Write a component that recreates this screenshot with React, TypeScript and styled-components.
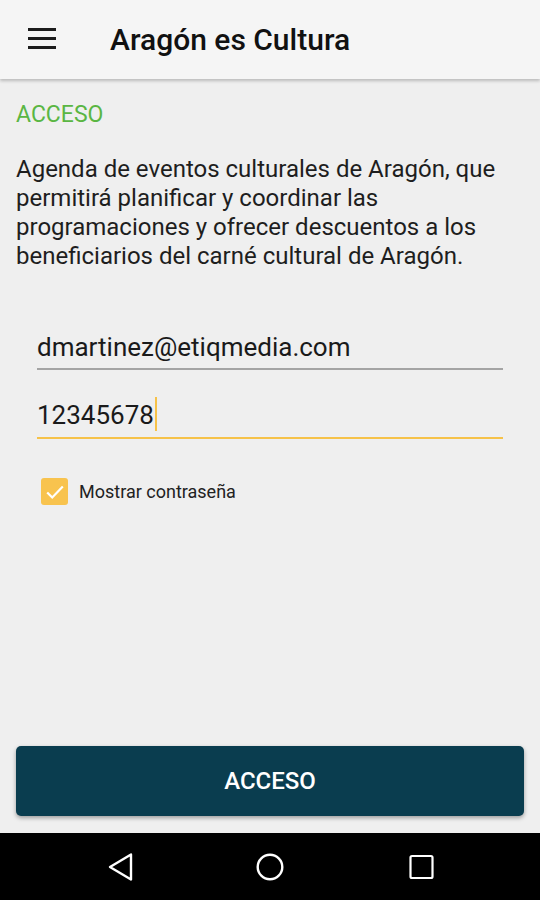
import React from "react";
import styled, { createGlobalStyle } from "styled-components";

const GlobalStyle = createGlobalStyle`
  html, body {
    margin: 0;
    padding: 0;
    background: #efefef;
  }
  body {
    font-family: Roboto, "Liberation Sans", sans-serif;
  }
`;

const Screen = styled.div`
  width: 540px;
  height: 900px;
  display: flex;
  flex-direction: column;
  background: #efefef;
  overflow: hidden;
`;

const AppBar = styled.header`
  height: 79px;
  flex: none;
  display: flex;
  align-items: center;
  background: #f5f5f5;
  box-shadow: 0 2px 3px rgba(0, 0, 0, 0.22);
  position: relative;
  z-index: 1;
`;

const MenuButton = styled.div`
  width: 28px;
  margin-left: 28px;
  margin-right: 54px;
  margin-bottom: 3px;
  display: flex;
  flex-direction: column;
  gap: 6px;
  span {
    display: block;
    height: 3px;
    background: #1c1c1c;
  }
`;

const Title = styled.h1`
  margin: 0;
  font-size: 30px;
  font-weight: 500;
  color: #111;
  padding-bottom: 1px;
`;

const Content = styled.main`
  flex: 1;
  display: flex;
  flex-direction: column;
  padding: 0 16px;
`;

const SectionLabel = styled.div`
  margin-top: 22px;
  font-size: 23px;
  line-height: 28px;
  color: #5ab643;
`;

const Intro = styled.p`
  margin: 26px 0 0;
  font-size: 24px;
  line-height: 29px;
  color: #1e1e1e;
`;

const Form = styled.div`
  margin-top: 61px;
  padding: 0 21px;
  display: flex;
  flex-direction: column;
`;

const Field = styled.div<{ $active?: boolean }>`
  font-size: 26px;
  line-height: 30px;
  padding-bottom: 6px;
  border-bottom: 2px solid ${(p) => (p.$active ? "#f6c249" : "#a4a4a4")};
  color: #1a1a1a;
  & + & {
    margin-top: 27px;
  }
`;

const Caret = styled.span`
  display: inline-block;
  width: 2px;
  height: 34px;
  background: #f6c249;
  margin-left: 1px;
  vertical-align: -7px;
`;

const CheckRow = styled.label`
  display: flex;
  align-items: center;
  gap: 11px;
  margin-top: 39px;
  margin-left: 4px;
  font-size: 18px;
  color: #222;
`;

const CheckBox = styled.span`
  width: 27px;
  height: 27px;
  border-radius: 3px;
  background: #f8c34e;
  display: flex;
  align-items: center;
  justify-content: center;
`;

const Spacer = styled.div`
  flex: 1;
`;

const SubmitButton = styled.button`
  height: 70px;
  margin-bottom: 17px;
  border: none;
  border-radius: 5px;
  background: #0a3d4f;
  color: #fff;
  font-family: Roboto, "Liberation Sans", sans-serif;
  font-size: 24px;
  font-weight: 500;
  box-shadow: 0 2px 4px rgba(0, 0, 0, 0.35);
`;

const NavBar = styled.nav`
  height: 67px;
  flex: none;
  background: #000;
  display: grid;
  grid-template-columns: 1fr 1fr 1fr;
  align-items: center;
  justify-items: center;
  padding: 0 40px;
`;

export default function App() {
  return (
    <>
      <GlobalStyle />
      <Screen>
        <AppBar>
          <MenuButton>
            <span />
            <span />
            <span />
          </MenuButton>
          <Title>Aragón es Cultura</Title>
        </AppBar>
        <Content>
          <SectionLabel>ACCESO</SectionLabel>
          <Intro>
            Agenda de eventos culturales de Aragón, que permitirá planificar y
            coordinar las programaciones y ofrecer descuentos a los
            beneficiarios del carné cultural de Aragón.
          </Intro>
          <Form>
            <Field>dmartinez@etiqmedia.com</Field>
            <Field $active>
              12345678
              <Caret />
            </Field>
            <CheckRow>
              <CheckBox>
                <svg width="22" height="22" viewBox="0 0 24 24">
                  <path
                    d="M3.5 12.5l5.5 5.5L20.5 6"
                    fill="none"
                    stroke="#fff"
                    strokeWidth="2.4"
                  />
                </svg>
              </CheckBox>
              Mostrar contraseña
            </CheckRow>
          </Form>
          <Spacer />
          <SubmitButton>ACCESO</SubmitButton>
        </Content>
        <NavBar>
          <svg width="32" height="32" viewBox="0 0 32 32">
            <path
              d="M30 3.5L9 16L30 28.5z"
              fill="none"
              stroke="#fff"
              strokeWidth="2.4"
              strokeLinejoin="round"
            />
          </svg>
          <svg width="30" height="30" viewBox="0 0 30 30">
            <circle cx="15" cy="15" r="12.3" fill="none" stroke="#fff" strokeWidth="2.4" />
          </svg>
          <svg width="28" height="28" viewBox="0 0 28 28">
            <rect x="1.5" y="3" width="22" height="22" rx="1.5" fill="none" stroke="#fff" strokeWidth="2.2" />
          </svg>
        </NavBar>
      </Screen>
    </>
  );
}
